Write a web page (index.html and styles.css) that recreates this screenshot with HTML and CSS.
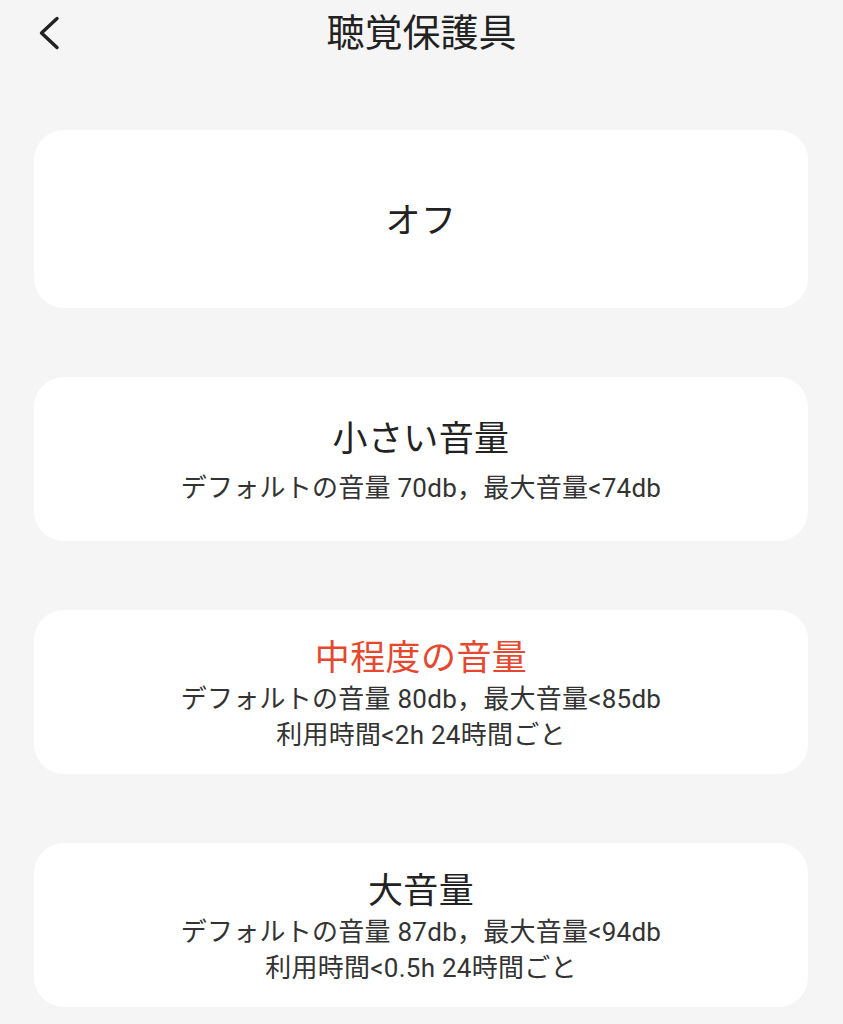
FILE: index.html
```html
<!DOCTYPE html>
<html lang="ja">
<head>
<meta charset="utf-8">
<title>聴覚保護具</title>
<link rel="stylesheet" href="styles.css">
</head>
<body>
<header class="topbar">
  <div class="back">
    <svg class="back-icon" width="22" height="34" viewBox="0 0 22 34" aria-hidden="true">
      <path d="M19 2.5 L3.5 17 L19 31.5" fill="none" stroke="#222" stroke-width="3.4" stroke-linecap="round" stroke-linejoin="round"/>
    </svg>
  </div>
  <h1 class="title">聴覚保護具</h1>
  <div></div>
</header>
<main class="list">
  <section class="card card-off">
    <div class="card-title">オフ</div>
  </section>
  <section class="card">
    <div class="card-title">小さい音量</div>
    <div class="card-sub card-sub-gap">デフォルトの音量 70db，最大音量&lt;74db</div>
  </section>
  <section class="card">
    <div class="card-title card-title-active">中程度の音量</div>
    <div class="card-sub">デフォルトの音量 80db，最大音量&lt;85db</div>
    <div class="card-sub">利用時間&lt;2h 24時間ごと</div>
  </section>
  <section class="card">
    <div class="card-title">大音量</div>
    <div class="card-sub">デフォルトの音量 87db，最大音量&lt;94db</div>
    <div class="card-sub">利用時間&lt;0.5h 24時間ごと</div>
  </section>
</main>
</body>
</html>
```
FILE: styles.css
```css
html, body {
  margin: 0;
  padding: 0;
}
body {
  background: #f5f5f5;
  font-family: Roboto, "Noto Sans CJK JP", "Noto Sans", sans-serif;
  color: #222;
  width: 843px;
  height: 1024px;
  overflow: hidden;
}
.topbar {
  display: grid;
  grid-template-columns: 1fr auto 1fr;
  align-items: center;
  height: 66px;
}
.back {
  padding-left: 38px;
  display: flex;
  align-items: center;
}
.back-icon {
  display: block;
}
.title {
  margin: 0;
  font-size: 38px;
  font-weight: 400;
  line-height: 66px;
  color: #222;
  letter-spacing: 0;
}
.list {
  display: flex;
  flex-direction: column;
  gap: 69px;
  padding: 64px 35px 0 34px;
}
.card {
  background: #fff;
  border-radius: 30px;
  height: 164px;
  box-sizing: border-box;
  padding-top: 6px;
  display: flex;
  flex-direction: column;
  justify-content: center;
  align-items: center;
  text-align: center;
}
.card-off {
  height: 178px;
}
.card-title {
  font-size: 35px;
  line-height: 44px;
  color: #222;
  letter-spacing: 0.4px;
}
.card-title-active {
  color: #e5472f;
}
.card-sub {
  font-size: 26px;
  line-height: 36px;
  color: #333;
  letter-spacing: 0.25px;
}
.card-sub-gap {
  margin-top: 8px;
}
```
